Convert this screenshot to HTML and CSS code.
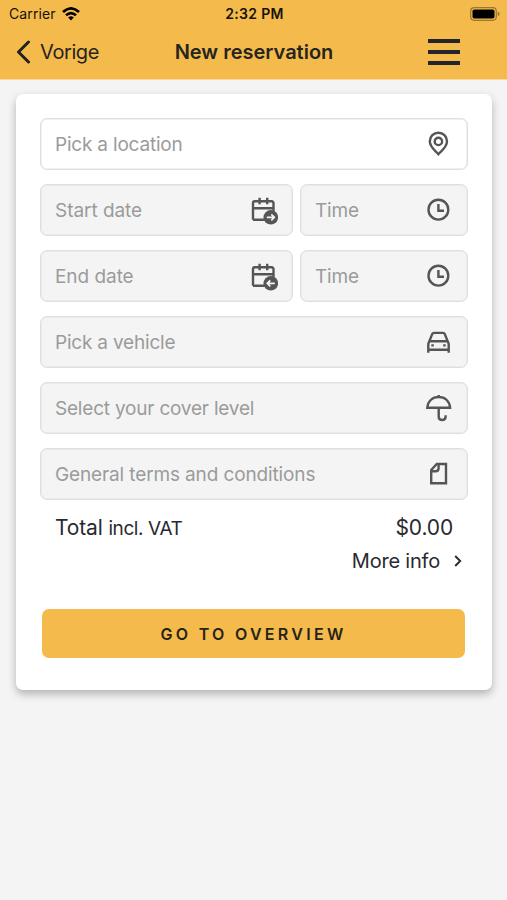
FILE: index.html
```html
<!DOCTYPE html>
<html lang="en">
<head>
<meta charset="utf-8">
<meta name="viewport" content="width=device-width, initial-scale=1">
<title>New reservation</title>
<link rel="stylesheet" href="styles.css">
</head>
<body>
<svg class="defs" width="0" height="0" aria-hidden="true">
  <symbol id="calendar" viewBox="0 0 30 30">
    <path d="M5 24.8V8a1.8 1.8 0 0 1 1.8-1.8h16.9A1.8 1.8 0 0 1 25.500 8v13M5 13.300h20.500M5 24.800h13M11.600 2.700v6.500M19.200 2.700v6.500"/>
    <circle cx="22.800" cy="22.300" r="7.300" fill="#555" stroke="none"/>
  </symbol>
  <symbol id="clock" viewBox="0 0 30 30">
    <circle cx="15.400" cy="14.700" r="9.900"/>
    <path d="M15.400 9v6.700h5.600"/>
  </symbol>
</svg>
<header class="header">
  <div class="status">
    <div class="carrier"><span class="carrier-name">Carrier</span>
      <svg width="18" height="14" viewBox="0 0 18 14" fill="none" stroke="#000" stroke-width="2.700"><path d="M1 5.100Q9-2.300 17 5.100M4 8.300Q9 3.800 14 8.300"/><path d="M6.200 10.500Q9 8.100 11.800 10.500L9 13.400Z" fill="#000" stroke="none"/></svg>
    </div>
    <div class="clock">2:32 PM</div>
    <div class="battery">
      <svg width="30" height="14" viewBox="0 0 30 14"><rect x=".7" y=".7" width="25.600" height="12.600" rx="3.500" fill="none" stroke="#9c762f" stroke-width="1.200"/><rect x="2.500" y="2.400" width="22" height="9.200" rx="1.800"/><path d="M27.700 4.800q2 .6 2 2.200t-2 2.200z" fill="#9c762f"/></svg>
    </div>
  </div>
  <nav class="nav">
    <a class="back"><svg width="16" height="24" viewBox="0 0 16 24" fill="none" stroke="#222" stroke-width="3" stroke-linecap="round" stroke-linejoin="round"><path d="M12.500 2 2.500 12l10 10"/></svg><span class="back-label">Vorige</span></a>
    <h1 class="title">New reservation</h1>
    <div class="menu"><span class="menu-bar"></span><span class="menu-bar"></span><span class="menu-bar"></span></div>
  </nav>
</header>
<main class="card">
  <div class="fields">
    <div class="field active"><span class="label location">Pick a location</span>
      <svg class="icon" viewBox="0 0 30 30"><path d="M15.400 25.200C12.500 21.600 6.800 18.500 6.800 12.300a8.600 8.600 0 0 1 17.200 0C24 18.500 18.300 21.600 15.400 25.200Z"/><circle cx="15.400" cy="12.400" r="3.700"/></svg>
    </div>
    <div class="row">
      <div class="field"><span class="label date">Start date</span>
        <svg class="icon" viewBox="0 0 30 30"><use href="#calendar"/><path class="arrow" d="M18.800 22.300h7M23.300 19.300l3 3-3 3"/></svg>
      </div>
      <div class="field"><span class="label">Time</span><svg class="icon"><use href="#clock"/></svg></div>
    </div>
    <div class="row">
      <div class="field"><span class="label date">End date</span>
        <svg class="icon" viewBox="0 0 30 30"><use href="#calendar"/><path class="arrow" d="M26.800 22.300h-7M22.300 19.300l-3 3 3 3"/></svg>
      </div>
      <div class="field"><span class="label">Time</span><svg class="icon"><use href="#clock"/></svg></div>
    </div>
    <div class="field"><span class="label">Pick a vehicle</span>
      <svg class="icon" viewBox="0 0 30 30"><path d="M5.300 25.800V16.800L9.300 6.900Q9.800 5.900 10.900 5.900h9.200q1.100 0 1.600 1L25.700 16.800v9M7.200 14.300h16.600M5.300 22.800h20.400"/><path d="M8.300 18.400h2.500M20.200 18.400h2.500"/></svg>
    </div>
    <div class="field"><span class="label">Select your cover level</span>
      <svg class="icon" viewBox="0 0 30 30"><path d="M4.300 14.700C5 7.800 9.500 4 15.700 4s10.700 3.800 11.400 10.700ZM15.700 2v2M15.700 14.700v8.800c0 4.700 6.900 4.700 6.900 0v-1.200"/></svg>
    </div>
    <div class="field"><span class="label terms">General terms and conditions</span>
      <svg class="icon" viewBox="0 0 30 30"><path d="M8.200 11 13.800 5h9.200v19.300H8.200ZM8.200 12.300H12.600q3 0 3-3V5"/></svg>
    </div>
  </div>
  <div class="total"><div class="total-label">Total <span class="vat">incl. VAT</span></div><div class="amount">$0.00</div></div>
  <div class="more"><span class="more-label">More info</span><svg width="8" height="12" viewBox="0 0 8 12" fill="none" stroke="#292a31" stroke-width="1.900"><path d="m1.200 1 5 5-5 5"/></svg></div>
  <button class="submit">GO TO OVERVIEW</button>
</main>
</body>
</html>
```

FILE: styles.css
```css
* { box-sizing: border-box; }
body { margin: 0; min-height: 900px; background: #f4f4f4; color: #292a31; font-family: Inter, "Liberation Sans", sans-serif; }
.defs { display: block; }
.header { height: 79px; background: #f4bb4c; box-shadow: 0 1px 0 #f8d99c; }
.status { height: 27px; padding: 0 7px 0 9px; display: grid; grid-template-columns: 1fr auto 1fr; align-items: center; color: #15120b; }
.carrier { display: flex; align-items: center; gap: 6px; font-size: 14px; letter-spacing: .1px; }
.clock { font-size: 14px; font-weight: 600; letter-spacing: .3px; }
.battery { display: flex; justify-content: flex-end; }
.nav { height: 50px; padding: 0 15px 0 16px; display: grid; grid-template-columns: 1fr auto 1fr; align-items: center; color: #26241f; }
.back { display: flex; align-items: center; gap: 8px; font-size: 20px; letter-spacing: -.4px; }
.title { margin: 0; font-size: 20px; font-weight: 600; }
.menu { display: flex; flex-direction: column; align-items: flex-end; gap: 7px; margin-right: 32px; }
.menu-bar { width: 32px; height: 4px; background: #24252b; }
.card { margin: 15px 15px 0 16px; height: 596px; padding: 24px 24px 0; background: #fff; border-radius: 7px; box-shadow: 0 4px 9px rgba(0, 0, 0, .27); }
.fields { display: flex; flex-direction: column; gap: 14px; }
.row { display: grid; grid-template-columns: 253px 1fr; gap: 7px; }
.field { height: 52px; padding: 0 14px; display: flex; align-items: center; justify-content: space-between; border: 1px solid #dfdfdf; border-radius: 7px; background: #f4f4f4; box-shadow: inset 0 0 0 .5px #e2e2e2; color: #9b9b9b; font-size: 19px; letter-spacing: -.2px; white-space: nowrap; }
.active { background: #fff; }
.date { letter-spacing: -.05px; }
.terms { letter-spacing: -.13px; }
.icon { flex: none; width: 30px; height: 30px; fill: none; stroke: #555; stroke-width: 2.400; }
.arrow { stroke: #f4f4f4; stroke-width: 1.700; }
.total { display: flex; justify-content: space-between; align-items: baseline; margin: 15px 15px 0; font-size: 21px; line-height: 26px; letter-spacing: -.15px; }
.vat { font-size: 19px; letter-spacing: -.4px; }
.more { display: flex; justify-content: flex-end; align-items: center; gap: 14px; margin: 6px 6px 0 0; font-size: 20px; line-height: 26px; letter-spacing: -.2px; }
.submit { display: block; width: calc(100% - 5px); height: 49px; margin: 35px 2px 0; padding: 1px 0 0; border: 0; border-radius: 7px; background: #f4bb4c; color: #27231a; font: 600 16px Inter, sans-serif; letter-spacing: 3.300px; }
```
